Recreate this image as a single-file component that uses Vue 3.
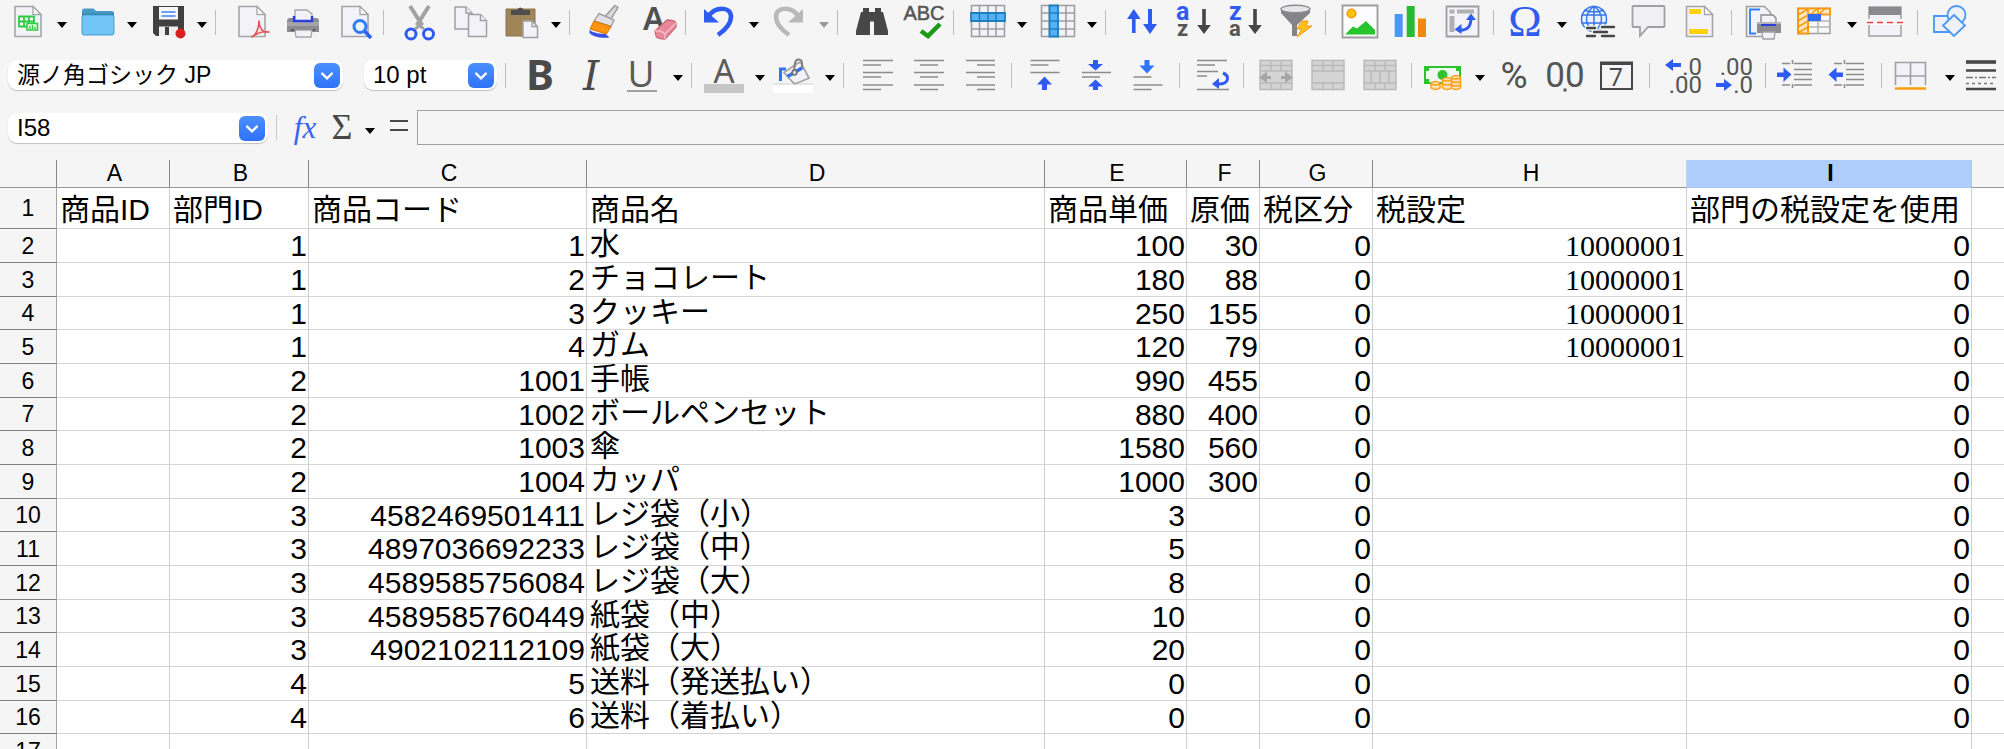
<template>
  <div class="calc">
    <header class="chrome">
      <div class="toolbar" role="toolbar" aria-label="標準">
        <div v-for="(group, g) in standardGroups" :key="g" class="toolbar__group">
          <template v-for="tool in group" :key="tool.id">
            <button class="tool" type="button" :aria-label="tool.id" :disabled="tool.disabled">
              <svg class="tool__icon" viewBox="0 0 36 36" aria-hidden="true" v-html="icons[tool.id]"></svg>
            </button>
            <button
                v-if="tool.menu"
                class="drop"
                type="button"
                :aria-label="tool.id + ' menu'"
                :disabled="tool.disabled"
            ></button>
          </template>
        </div>
      </div>

      <div class="toolbar toolbar--format" role="toolbar" aria-label="書式設定">
        <span class="combo combo--font">
          <select v-model="fontName" class="combo__select" aria-label="フォント名">
            <option>源ノ角ゴシック JP</option>
          </select>
          <span class="combo__chip"><svg viewBox="0 0 26 26"><path d="M8 11l5 5 5-5" /></svg></span>
        </span>
        <span class="combo combo--size">
          <select v-model="fontSize" class="combo__select" aria-label="フォントサイズ">
            <option>10 pt</option>
          </select>
          <span class="combo__chip"><svg viewBox="0 0 26 26"><path d="M8 11l5 5 5-5" /></svg></span>
        </span>
        <div v-for="(group, g) in formatGroups" :key="g" class="toolbar__group toolbar__group--lead">
          <template v-for="tool in group" :key="tool.id">
            <button class="tool" type="button" :aria-label="tool.id">
              <svg class="tool__icon" viewBox="0 0 36 36" aria-hidden="true" v-html="icons[tool.id]"></svg>
            </button>
            <button v-if="tool.menu" class="drop" type="button" :aria-label="tool.id + ' menu'"></button>
          </template>
        </div>
      </div>

      <div class="formula">
        <span class="combo combo--name">
          <select v-model="cellName" class="combo__select" aria-label="名前ボックス">
            <option>I58</option>
          </select>
          <span class="combo__chip"><svg viewBox="0 0 26 26"><path d="M8 11l5 5 5-5" /></svg></span>
        </span>
        <span class="formula__separator"></span>
        <button class="formula__fx" type="button">fx</button>
        <button class="formula__sum" type="button">Σ</button>
        <button class="drop formula__drop" type="button" aria-label="sum menu"></button>
        <button class="formula__equals" type="button" aria-label="equals">
          <svg viewBox="0 0 20 20"><path d="M1 5h18M1 14h18" /></svg>
        </button>
        <input v-model="formula" class="formula__input" type="text" aria-label="数式入力" />
      </div>
    </header>

    <table class="sheet">
      <colgroup>
        <col class="sheet__col-index" />
        <col v-for="column in columns" :key="column" :class="'sheet__col-' + column.toLowerCase()" />
        <col />
      </colgroup>
      <thead>
        <tr>
          <th class="sheet__corner"></th>
          <th
              v-for="column in columns"
              :key="column"
              scope="col"
              class="sheet__head"
              :class="{ 'sheet__head--before': column === 'H', 'sheet__head--active': column === 'I' }"
          >{{ column }}</th>
          <th class="sheet__head sheet__head--last"></th>
        </tr>
      </thead>
      <tbody>
        <tr v-for="(row, r) in rows" :key="r" :class="{ 'sheet__titles': r === 0 }">
          <th scope="row" class="sheet__index">{{ r + 1 }}</th>
          <td
              v-for="(value, c) in row"
              :key="c"
              class="sheet__cell"
              :class="{
                'sheet__cell--number': typeof value === 'number',
                'sheet__cell--serif': c === 7 && r > 0,
              }"
          >{{ value }}</td>
          <td class="sheet__cell sheet__cell--last"></td>
        </tr>
      </tbody>
    </table>
  </div>
</template>

<script setup>
import { ref } from 'vue';

const fontName = ref('源ノ角ゴシック JP');
const fontSize = ref('10 pt');
const cellName = ref('I58');
const formula = ref('');

const standardGroups = [
  [{ id: 'new', menu: true }, { id: 'open', menu: true }, { id: 'save', menu: true }],
  [{ id: 'pdf' }, { id: 'print' }, { id: 'preview' }],
  [{ id: 'cut' }, { id: 'copy' }, { id: 'paste', menu: true }],
  [{ id: 'clone' }, { id: 'clear' }],
  [{ id: 'undo', menu: true }, { id: 'redo', menu: true, disabled: true }],
  [{ id: 'find' }, { id: 'spelling' }],
  [{ id: 'row', menu: true }, { id: 'column', menu: true }],
  [{ id: 'sort' }, { id: 'sortAsc' }, { id: 'sortDesc' }, { id: 'filter' }],
  [{ id: 'image' }, { id: 'chart' }, { id: 'pivot' }],
  [{ id: 'symbol', menu: true }, { id: 'link' }, { id: 'comment' }, { id: 'headers' }],
  [{ id: 'printArea' }, { id: 'freeze', menu: true }, { id: 'split' }],
  [{ id: 'shapes' }],
];

const formatGroups = [
  [{ id: 'bold' }, { id: 'italic' }, { id: 'underline', menu: true }],
  [{ id: 'color', menu: true }, { id: 'fill', menu: true }],
  [{ id: 'left' }, { id: 'center' }, { id: 'right' }],
  [{ id: 'top' }, { id: 'middle' }, { id: 'bottom' }],
  [{ id: 'wrap' }],
  [{ id: 'mergeCenter' }, { id: 'merge' }, { id: 'unmerge' }],
  [{ id: 'currency', menu: true }, { id: 'percent' }, { id: 'number' }, { id: 'date' }],
  [{ id: 'addDecimal' }, { id: 'removeDecimal' }],
  [{ id: 'indent' }, { id: 'outdent' }],
  [{ id: 'borders', menu: true }, { id: 'borderStyle' }],
];

const columns = ['A', 'B', 'C', 'D', 'E', 'F', 'G', 'H', 'I'];

const rows = [
  ['商品ID', '部門ID', '商品コード', '商品名', '商品単価', '原価', '税区分', '税設定', '部門の税設定を使用'],
  ['', 1, 1, '水', 100, 30, 0, 10000001, 0],
  ['', 1, 2, 'チョコレート', 180, 88, 0, 10000001, 0],
  ['', 1, 3, 'クッキー', 250, 155, 0, 10000001, 0],
  ['', 1, 4, 'ガム', 120, 79, 0, 10000001, 0],
  ['', 2, 1001, '手帳', 990, 455, 0, '', 0],
  ['', 2, 1002, 'ボールペンセット', 880, 400, 0, '', 0],
  ['', 2, 1003, '傘', 1580, 560, 0, '', 0],
  ['', 2, 1004, 'カッパ', 1000, 300, 0, '', 0],
  ['', 3, 4582469501411, 'レジ袋（小）', 3, '', 0, '', 0],
  ['', 3, 4897036692233, 'レジ袋（中）', 5, '', 0, '', 0],
  ['', 3, 4589585756084, 'レジ袋（大）', 8, '', 0, '', 0],
  ['', 3, 4589585760449, '紙袋（中）', 10, '', 0, '', 0],
  ['', 3, 4902102112109, '紙袋（大）', 20, '', 0, '', 0],
  ['', 4, 5, '送料（発送払い）', 0, '', 0, '', 0],
  ['', 4, 6, '送料（着払い）', 0, '', 0, '', 0],
  ['', '', '', '', '', '', '', '', ''],
];

// shared pieces of the icons
const page = (x) =>
    `<path d="M${x} 2.5h18l8 8v22h-26z" fill="#f3f2f8" stroke="#a6a6aa" stroke-width="1.6"/><path d="M${x + 18} 2.5v8h8z" fill="#fff" stroke="#a6a6aa" stroke-width="1.3"/>`;
const lines = (d) => `<path d="${d}" stroke="#8c8c8c" stroke-width="1.6" fill="none"/>`;
const blue = '#2f5cf0';
const undoArrow = (color) =>
    `<path d="M6 13C13 2 29 2 29 13c0 7-6 13-13 18" fill="none" stroke="${color}" stroke-width="4.6"/><path d="M2 5v13.5h15z" fill="${color}"/>`;
const grid = '<path d="M1.5 1.5h33v31h-33z" fill="#f3f2f8"/><path d="M1.5 1.5h33v31h-33zM9.5 1.5v31M18 1.5v31M26 1.5v31M1.5 9h33M1.5 17h33M1.5 25h33" fill="none" stroke="#9d9da1" stroke-width="1.5"/>';
const sortDown = (x) => `<path d="M${x - 1.8} 5h3.6v16h5L${x} 30l-6.8-9h5z" fill="#474747"/>`;
const mergeBase = (inner) =>
    `<path d="M0 3.5h32v29H0z" fill="#d4d4d4"/><path d="M0 3.5h32v29H0zM0 8.5h32M0 14h32M0 26h32M11 3.5V14M21 3.5V14M11 26v6.5M21 26v6.5" fill="none" stroke="#b9b9b9" stroke-width="1.4"/>${inner}`;

const icons = {
  new: `${page(5)}<path d="M9 12.5h15v10H9zM9 17.5h15M14 12.5v10M19 12.5v10" fill="none" stroke="#2ecc40" stroke-width="1.8"/><path d="M17 19.5h10.5v6.5H17z" fill="#eafbe9" stroke="#2ecc40" stroke-width="1.6"/><path d="M20 25v-3M22.5 25v-4M25 25v-2" stroke="#2ecc40" stroke-width="1.4"/>`,
  open: '<path d="M2 7q0-2.5 2-2.5h9q1 0 2 1.5l1 1h16q2 0 2 2v8H2z" fill="#4799c6"/><path d="M2 9.5h32V15H2z" fill="#2f7eaa"/><path d="M2 13q0-2 2-2h28q2 0 2 2v16q0 2-2 2H4q-2 0-2-2z" fill="#72c5f7" stroke="#479fd0"/>',
  save: '<path d="M3 2h31v30H6l-3-3z" fill="#404040"/><path d="M9 3h19v12.5H9z" fill="#f7f7fb"/><path d="M11.5 8h14M11.5 12h14" stroke="#3b82f6" stroke-width="1.5"/><path d="M9 22.5h19V32H9z" fill="#eee"/><path d="M15 23h4v8h-4z" fill="#404040"/><circle cx="30.5" cy="29.5" r="5" fill="#d8201f"/>',
  pdf: `${page(7)}<path d="M20 33c4-2 7-9 7-16 0 6 3 12 10 11-6-1-12 1-17 5z" fill="#fbe3e3" stroke="#e35353" stroke-width="1.6" stroke-linejoin="round"/>`,
  print: '<path d="M11 14V6h12l5 4v8H11z" fill="#f3f2f8" stroke="#a6a6aa" stroke-width="1.4"/><path d="M3 17q0-3 3-3h4v4h19v-4h3q3 0 3 3v11H3z" fill="#8c8c90"/><path d="M3 18h32v4H3z" fill="#a6a6aa"/><path d="M10 12v5h18v-5" fill="none" stroke="#2940dc" stroke-width="2.4"/><path d="M7 26h24" stroke="#58585c" stroke-width="2"/><path d="M11 26h17l-1 7H12z" fill="#f3f2f8" stroke="#a6a6aa" stroke-width="1.3"/>',
  preview: `${page(6)}<circle cx="24" cy="22.5" r="6" fill="#e9f3ff" stroke="#2f7cf6" stroke-width="3"/><path d="M28.5 27l6.5 7" stroke="#2b62f2" stroke-width="3.6"/>`,
  cut: `<path d="M10 2l12 19M29 2L17 21" stroke="#a2a2a5" stroke-width="4"/><path d="M16 19l8 6M23 19l-8 6" stroke="#a2a2a5" stroke-width="3"/><circle cx="11" cy="30" r="5" fill="none" stroke="${blue}" stroke-width="3"/><circle cx="28.5" cy="30" r="5" fill="none" stroke="${blue}" stroke-width="3"/>`,
  copy: '<g fill="#f3f2f8" stroke="#a0a0a4" stroke-width="1.5"><path d="M3 3h11l6 6v16H3z"/><path d="M14 3v6h6"/><path d="M16.5 10.5h12l6 6v16h-18z"/><path d="M28.5 10.5v6h6"/></g>',
  paste: '<path d="M2 5h29v27H2z" fill="#a08558" stroke="#8d734a"/><path d="M7 11V6h6q3-5 7 0h6v5z" fill="#4d4d4d"/><path d="M19 17h9l5.5 5.5V33.5H19z" fill="#f3f2f8" stroke="#a0a0a4" stroke-width="1.5"/><path d="M28 17v5.5h5.5" fill="none" stroke="#a0a0a4" stroke-width="1.3"/>',
  clone: '<path d="M29 1.5l3 2-8 13-6-3z" fill="#d8d8dc" stroke="#99999d" stroke-width="1.4"/><path d="M13 9.5l15 6.5-3 6.5-17-5.5z" fill="#e2e2e6" stroke="#a0a0a4" stroke-width="1.4"/><path d="M8 17l17 5.5-4.5 7.5-16.5-5z" fill="#ff9411" stroke="#d97400"/><path d="M3.5 26c4 3 11 4 16 4l4 3.5c-9 1-17-1-20-4.5z" fill="#3850e4"/>',
  clear: '<text x="5" y="26" font-family="Noto Sans, sans-serif" font-size="32" font-weight="600" fill="#505050">A</text><path d="M17 27l12-11q7 0 9 3v4L27 35q-8 0-9-3z" fill="#e8899a" stroke="#d0667a" stroke-width="1.3"/><path d="M17 27q6-1 10 3l11-11M27 30v5" fill="none" stroke="#f6b9c4" stroke-width="1.5"/>',
  undo: undoArrow(blue),
  redo: `<g transform="translate(33 0) scale(-1 1)">${undoArrow('#b9b9b9')}</g>`,
  find: '<path d="M9 4h6v4h6V4h6v4h2l5 19v4H20V20h-4v11H2v-4L7 8h2z" fill="#474747"/><path d="M16 17.5h4v5h-4z" fill="#f5f5f5"/>',
  spelling: '<text x="18" y="16" text-anchor="middle" font-family="Liberation Sans, sans-serif" font-size="20" fill="#555" stroke="#555" stroke-width=".5">ABC</text><path d="M15 27l7 5L34 20" fill="none" stroke="#1a9a17" stroke-width="4.5"/>',
  row: `${grid}<path d="M1 9h34v8H1z" fill="#56b2f3" stroke="#1c7fc0" stroke-width="1.8"/><path d="M9.5 9v8M18 9v8M26 9v8" stroke="#1c7fc0" stroke-width="1.5"/>`,
  column: `${grid}<path d="M9.5 1.5H18v31H9.5z" fill="#56b2f3" stroke="#1c7fc0" stroke-width="1.8"/><path d="M9.5 9H18M9.5 17H18M9.5 25H18" stroke="#1c7fc0" stroke-width="1.5"/>`,
  sort: `<path d="M10 29V15H5l6.8-10 6.8 10h-5v14zM26 5h4v15h5l-7 10-7-10h5z" fill="${blue}"/>`,
  sortAsc: `<text x="2" y="16" font-family="Roboto, sans-serif" font-size="25" font-weight="700" fill="${blue}">a</text><text x="3" y="32" font-family="Roboto, sans-serif" font-size="22" font-weight="700" fill="#555">z</text>${sortDown(30)}`,
  sortDesc: `<text x="3" y="16" font-family="Roboto, sans-serif" font-size="25" font-weight="700" fill="${blue}">z</text><text x="3" y="32" font-family="Roboto, sans-serif" font-size="22" font-weight="700" fill="#555">a</text>${sortDown(29)}`,
  filter: '<path d="M3 5v4l11 12v11h5V21L32 9V5z" fill="#858589"/><ellipse cx="17.5" cy="5" rx="14.5" ry="3.8" fill="#e6e6ea" stroke="#8c8c90" stroke-width="1.4"/><path d="M24 17h6l-2 5h6L19 33l5-8h-5z" fill="#ffc01a" stroke="#f59a0c"/>',
  image: '<path d="M.5 1.5h35v32h-35z" fill="#fdfdff" stroke="#9d9da1" stroke-width="1.8"/><circle cx="9.500" cy="9.500" r="4.3" fill="#ffc60a" stroke="#f39a1b" stroke-width="1.6"/><path d="M3 30.5l8-8 4 2 9-7.5 9 9v4.5z" fill="#25c52b"/>',
  chart: '<path d="M.7 10h8v23h-8z" fill="#4a98f5"/><path d="M12.7 2h8v31h-8z" fill="#2abb34"/><path d="M24 14.5h8V33h-8z" fill="#f08a0c"/>',
  pivot: `<path d="M.5 2.5h32v30H.5z" fill="#f3f2f8" stroke="#9d9da1" stroke-width="1.8"/><path d="M3.5 5.5h5v4h-5zM11 5.5h17v4H11zM3.5 12h5v16h-5z" fill="#b0b0b3"/><path d="M12 26c9 1 13-3 13-12" fill="none" stroke="${blue}" stroke-width="3"/><path d="M8.5 25.5l7-5.5v10zM25 9.5l-5 6.5h10z" fill="${blue}"/>`,
  symbol: `<text x="15" y="32" text-anchor="middle" font-family="Liberation Serif, serif" font-size="45" fill="${blue}">Ω</text>`,
  link: '<circle cx="14" cy="15" r="13" fill="#e9f2ff"/><path d="M14 2v26M1.5 11h25M1.5 19h25M4 6q10 4 20 0M14 2C4 10 4 20 14 28M14 2c10 8 10 18 0 26" fill="none" stroke="#3575e8" stroke-width="1.5"/><circle cx="14" cy="15" r="12.5" fill="none" stroke="#3575e8" stroke-width="1.5"/><path d="M7 24h8M14 28h13M22 23h12M7 32h8M22 32h12" stroke="#f5f5f5" stroke-width="5" stroke-linecap="round"/><path d="M7 24h8M14 28h13M22 23h12M7 32h8M22 32h12" stroke="#474747" stroke-width="2.4" stroke-linecap="round"/>',
  comment: '<path d="M1.5 2h30q1 0 1 1v19q0 1-1 1H16L8 32v-9H1.5q-1 0-1-1V3q0-1 1-1z" fill="#f0eff4" stroke="#a0a0a4" stroke-width="1.8"/>',
  headers: `${page(2.5)}<path d="M5 5h12v5H5zM5 25h19v5H5z" fill="#fdd20a"/>`,
  printArea: '<path d="M-1.5 2.5h18l6 6v24h-24z" fill="#f3f2f8" stroke="#a0a0a4" stroke-width="1.6"/><path d="M12 5.5H2v24h6" fill="none" stroke="#2f7cf6" stroke-width="1.8"/><path d="M13 20v-9h12l3 3v6z" fill="#f3f2f8" stroke="#8c8c90" stroke-width="1.4"/><path d="M9 19h24v10H9z" fill="#8c8c90"/><path d="M9 19h24" stroke="#b5b5b8" stroke-width="2"/><path d="M13 21h15" stroke="#2940dc" stroke-width="2"/><path d="M14 28h13l-1 7H15z" fill="#f3f2f8" stroke="#a0a0a4" stroke-width="1.3"/>',
  freeze: '<path d="M-2 4.5h32v25H-2z" fill="#f8f8fb" stroke="#a0a0a4" stroke-width="1.5"/><path d="M8 17h22M8 23h22M18 11v18" stroke="#b5b5b8" stroke-width="1.5"/><path d="M-2 4.5h32v6H8v19H-2z" fill="#ffe6c2" stroke="#f89a12" stroke-width="2"/><path d="M-2 11l10-6M-2 17l10-6M-2 23l10-6M-2 29l10-6M11 10l6-5M19 10l6-5M8 5v6M18 5v6" stroke="#f89a12" stroke-width="1.6"/><path d="M8 10h13v7H8z" fill="#2f6bf5"/>',
  split: '<path d="M-1 3h32v29H-1z" fill="#f3f2f8" stroke="#a0a0a4" stroke-width="1.5"/><path d="M-1 3h32v8H-1z" fill="#8a8a8e"/><path d="M-3 15h38v6H-3z" fill="#f9f9fb"/><path d="M-3 18.5h37" stroke="#ee3d3d" stroke-width="1.6" stroke-dasharray="6 4"/>',
  shapes: '<g fill="#eef1f8" stroke="#4b97f5" stroke-width="1.8"><path d="M0 12h19v16H0z"/><circle cx="22.5" cy="11" r="9"/><path d="M20 11l11 10.5L20 32 9 21.5z"/></g>',

  bold: '<text x="4" y="33" font-family="Noto Sans, sans-serif" font-size="42" font-weight="700" fill="#4a4a4a">B</text>',
  italic: '<text x="9" y="33" font-family="DejaVu Serif, serif" font-size="41" font-style="italic" fill="#4a4a4a">I</text>',
  underline: '<text x="15" y="30" text-anchor="middle" font-family="Open Sans, sans-serif" font-size="37" fill="#5a5a5a">U</text><path d="M1 34h30" stroke="#a0a0a0" stroke-width="2"/>',
  color: '<text x="16" y="26" text-anchor="middle" font-family="Noto Sans, sans-serif" font-size="33" fill="#5a5a5a">A</text><path d="M-4 27h40v9H-4z" fill="#c6c6c6"/>',
  fill: '<path d="M-5 27h40v9H-5z" fill="#fff"/><path d="M-5 27h40" stroke="#d0d0d0"/><path d="M2.5 24V12H8" fill="none" stroke="#3173f5" stroke-width="3"/><path d="M6 15.5L20 6q2-1 3 0l8 15-13 5.5q-2 .5-3-1z" fill="#f3f2f8" stroke="#a5a5a9" stroke-width="1.8"/><path d="M9.500 19.500L24 11" stroke="#3173f5" stroke-width="3.5"/><path d="M16 15l1-9q1-4 4-3.500t3 3.500v6" fill="none" stroke="#808084" stroke-width="2"/><circle cx="16.500" cy="15.500" r="2.400" fill="#ddd" stroke="#6d6d70" stroke-width="1.500"/>',
  left: lines('M3 3.5h30M3 8h18M3 15.5h30M3 20h18M3 28h30M3 32.5h18'),
  center: lines('M2 3.5h30M8 8h18M2 15.5h30M8 20h18M2 28h30M8 32.5h18'),
  right: lines('M2 3.5h29M13 8h18M2 15.5h29M13 20h18M2 28h29M13 32.5h18'),
  top: `${lines('M2.5 3.5h29M2.5 8h18M2.5 15.5h29')}<path d="M16.5 19.5l7.5 8h-5v5.5h-5v-5.5h-5z" fill="${blue}"/>`,
  middle: `${lines('M2 15.5h29M2 20h18')}<path d="M13 3h5v4h5l-7.5 6.5L8 7h5zM15.5 22.5l7.5 7h-5V33h-5v-3.5H8z" fill="${blue}"/>`,
  bottom: `${lines('M1.5 20h18M1.5 28h29M1.5 32.5h18')}<path d="M12.5 3h5v5.5h5L15 16.5 7.5 8.5h5z" fill="#2f75fa"/>`,
  wrap: `${lines('M1 3.5h30M1 8h18M1 14.5h21M1 19h10M1 32.5h32')}<path d="M27 16c7 3 6 11-4 11" fill="none" stroke="${blue}" stroke-width="3"/><path d="M16 27l7-6v11z" fill="${blue}"/>`,
  mergeCenter: mergeBase('<path d="M-1 20.5l8-6v4.5h4v3H7v4zM33 20.5l-8-6v4.5h-4v3h4v4z" fill="#a6a6a6"/>'),
  merge: mergeBase(''),
  unmerge: mergeBase('<path d="M7 14v12M16 14v12M25 14v12" stroke="#b9b9b9" stroke-width="1.5"/>'),
  currency: '<path d="M-3 10h35v16H-3z" fill="#f0f7f0" stroke="#2bc42f" stroke-width="2"/><circle cx="14.5" cy="18" r="5" fill="#2bc42f"/><path d="M-2 11h3v3h-3zM28 11h3v3h-3zM-2 22h3v3h-3z" fill="#2bc42f"/><g fill="#ffe2ae" stroke="#f8a01c" stroke-width="1.5"><path d="M3 26q4.5-3 9 0v5q-4.5 3-9 0zM14.5 22q4.5-3 9 0v9q-4.5 3-9 0zM23.5 20q4.5-3 9 0v11q-4.5 3-9 0z"/><path d="M3 27q4.5 2 9 0M14.5 23q4.5 2 9 0M14.5 27q4.5 2 9 0M23.5 21q4.5 2 9 0M23.5 24.5q4.5 2 9 0M23.5 28q4.5 2 9 0" fill="none"/></g>',
  percent: '<text x="16" y="31" text-anchor="middle" font-family="Roboto, sans-serif" font-size="37" fill="#505050">%</text>',
  number: '<text x="15" y="30" text-anchor="middle" font-family="Roboto, sans-serif" font-size="35" fill="#555">00</text><path d="M13.5 31.5h3v3h-3z" fill="#555"/>',
  date: '<path d="M-1 6h31v26H-1z" fill="none" stroke="#474747" stroke-width="2"/><path d="M-2 4.5h33V8H-2z" fill="#474747"/><text x="14" y="28.5" text-anchor="middle" font-family="Open Sans, sans-serif" font-size="25" fill="#474747">7</text>',
  addDecimal: `<path d="M-1 8l8-6v4h8v4H7v4z" fill="${blue}"/><g font-family="Roboto, sans-serif" font-size="24" fill="#555" text-anchor="end"><text x="36" y="17.5">.0</text><text x="36" y="36">.00</text></g>`,
  removeDecimal: `<path d="M14 28l-8-6v4h-8v4h8v4z" fill="${blue}"/><g font-family="Roboto, sans-serif" font-size="24" fill="#555" text-anchor="end"><text x="35" y="17.5">.00</text><text x="35" y="36">.0</text></g>`,
  indent: `${lines('M0 6.5h8M12 6.5h18M12 12.5h18M12 17.5h18M12 22.5h18M0 28h8M12 28h18M10.5 3v4M10.5 27v4')}<path d="M9.5 17.5l-8-7v5H-5v4.5h6.5v5z" fill="${blue}"/>`,
  outdent: `${lines('M0 6.5h8M12 6.5h18M12 12.5h18M12 17.5h18M12 22.5h18M0 28h8M12 28h18M10.5 3v4M10.5 27v4')}<path d="M-5.5 17.5l8-7v5H9v4.5H2.5v5z" fill="${blue}"/>`,
  borders: '<path d="M-2.5 5.5h30V28h-30z" fill="#f3f2f8"/><path d="M-2.5 28V5.5h30V28M12.5 5v23M-3 19h31" fill="none" stroke="#a0a0a4" stroke-width="1.6"/><path d="M-3 31.5h31" stroke="#f99c0e" stroke-width="2.5"/>',
  borderStyle: '<path d="M-2 5h30" stroke="#474747" stroke-width="3.6"/><path d="M-2 13.5h30M-2 32h30" stroke="#474747" stroke-width="2.4"/><path d="M-2 20.5h30" stroke="#777" stroke-width="1.5" stroke-dasharray="7 2 2 2"/><path d="M-2 26.5h30" stroke="#777" stroke-width="1.5" stroke-dasharray="3 3"/>',
};
</script>

<style>
body {
  margin: 0;
  background-color: #ffffff;
}
</style>

<style scoped>
.calc {
  height: 100vh;
  overflow: hidden;
  background-color: #ffffff;
  color: #000000;
  font-family: 'Liberation Sans', 'Noto Sans CJK JP', sans-serif;
}

button {
  padding: 0;
  border: none;
  background: none;
  flex: none;
}

.chrome {
  padding: 4px 0 15px;
  display: flex;
  flex-direction: column;
  gap: 17px;
  background-color: #f5f5f5;
}

.toolbar {
  height: 36px;
  padding-left: 2px;
  display: flex;
  align-items: center;
}

.toolbar--format {
  padding-left: 8px;
}

.toolbar__group {
  flex: none;
  display: flex;
  align-items: center;
}

.toolbar__group + .toolbar__group::before,
.toolbar__group--lead::before {
  content: '';
  width: 1px;
  height: 25px;
  margin: 0 8px 0 3px;
  background-color: #bdbdc0;
}

.tool {
  width: 52px;
  height: 36px;
  display: grid;
  place-items: center;
}

.tool__icon {
  width: 36px;
  height: 36px;
  overflow: visible;
}

.drop {
  width: 18px;
  height: 36px;
  padding: 6px 2px 0 0;
  display: grid;
  place-items: center;
}

.drop::before {
  content: '';
  border: 5px solid transparent;
  border-top: 6px solid #000000;
  border-bottom: none;
}

.drop:disabled::before {
  border-top-color: #9a9a9a;
}

.combo {
  position: relative;
  flex: none;
  height: 30px;
  border-radius: 9px;
  background-color: #ffffff;
  box-shadow: 0 1px 1px rgba(0, 0, 0, 0.22);
}

.combo--font {
  width: 335px;
  margin-right: 21px;
  font-size: 23px;
}

.combo--size {
  width: 133px;
  margin-right: 5px;
  font-size: 24px;
}

.combo--name {
  width: 260px;
  font-size: 24px;
}

.combo__select {
  appearance: none;
  width: 100%;
  height: 30px;
  padding: 0 32px 0 9px;
  border: none;
  background: none;
  font: inherit;
  line-height: 30px;
  color: #000000;
}

.combo__chip {
  position: absolute;
  top: 3px;
  right: 3px;
  width: 26px;
  height: 25px;
  border-radius: 6px;
  background: linear-gradient(180deg, #4a90ff 0%, #2f72f8 100%);
  pointer-events: none;
}

.combo__chip svg {
  display: block;
  width: 26px;
  height: 25px;
  fill: none;
  stroke: #ffffff;
  stroke-width: 2.5px;
  stroke-linecap: round;
}

.formula {
  height: 35px;
  padding-left: 8px;
  display: flex;
  align-items: center;
}

.formula__separator {
  width: 1px;
  height: 25px;
  margin: 0 3px 0 8px;
  background-color: #c8c8ca;
}

.formula__fx,
.formula__sum {
  height: 35px;
  font-family: 'Liberation Serif', serif;
  line-height: 35px;
}

.formula__fx {
  width: 50px;
  font-size: 31px;
  font-style: italic;
  color: #3565ee;
}

.formula__sum {
  width: 24px;
  font-size: 36px;
  color: #474747;
}

.formula__drop {
  margin-left: 8px;
}

.formula__equals {
  width: 37px;
  height: 35px;
}

.formula__equals svg {
  width: 20px;
  height: 20px;
  fill: none;
  stroke: #474747;
  stroke-width: 2px;
}

.formula__input {
  flex: 1;
  min-width: 0;
  height: 35px;
  box-sizing: border-box;
  padding: 0 4px;
  border: 1px solid #a0a0a2;
  border-right: none;
  background-color: #f5f5f5;
  font-family: inherit;
  font-size: 24px;
  outline: none;
}

.sheet {
  width: 100%;
  table-layout: fixed;
  border-collapse: separate;
  border-spacing: 0;
}

.sheet__col-index { width: 57px; }
.sheet__col-a { width: 113px; }
.sheet__col-b { width: 139px; }
.sheet__col-c { width: 278px; }
.sheet__col-d { width: 458px; }
.sheet__col-e { width: 142px; }
.sheet__col-f { width: 73px; }
.sheet__col-g { width: 113px; }
.sheet__col-h { width: 314px; }
.sheet__col-i { width: 285px; }

.sheet th,
.sheet td {
  box-sizing: border-box;
  padding: 0;
  white-space: nowrap;
}

.sheet__corner,
.sheet__head,
.sheet__index {
  background-color: #f5f5f5;
  font-size: 23px;
  font-weight: 400;
}

.sheet__corner,
.sheet__head {
  height: 28px;
  line-height: 27px;
  border-right: 1px solid #88888a;
  border-bottom: 1px solid #98989a;
}

th.sheet__head {
  padding-left: 3px;
}

.sheet__head--before {
  border-right-color: #c2d8f7;
}

.sheet__head--active {
  border-color: #a6c6f4;
  background-color: #aecdfb;
  font-weight: 700;
}

.sheet__head--last,
.sheet__cell--last {
  border-right: none;
}

.sheet__index {
  height: 34px;
  line-height: 32px;
  border-right: 1px solid #a4a4a6;
  border-bottom: 1px solid #808082;
}

.sheet__cell {
  vertical-align: top;
  font-size: 30px;
  line-height: 30px;
  border-right: 1px solid #cfcfd0;
  border-bottom: 1px solid #d4d4d5;
}

td.sheet__cell {
  padding-left: 3px;
}

td.sheet__cell--number {
  padding: 2px 1px 0 0;
  text-align: right;
}

td.sheet__cell--serif {
  font-family: 'Liberation Serif', serif;
}

td.sheet__cell--last {
  border-right: none;
}

.sheet tbody tr:nth-child(3n + 4) .sheet__index {
  height: 33px;
}

.sheet__titles .sheet__index {
  height: 41px;
}

.sheet__titles td.sheet__cell {
  padding-top: 7px;
}
</style>
